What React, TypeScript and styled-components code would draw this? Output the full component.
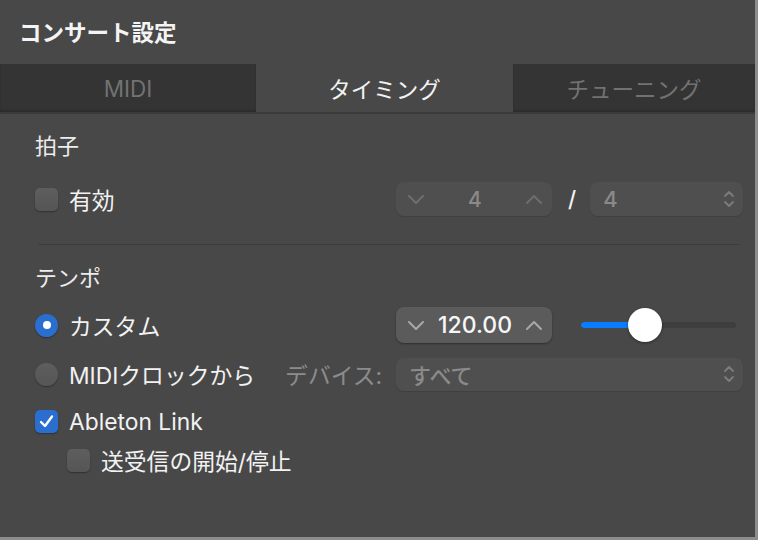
import React from "react";
import styled, { createGlobalStyle } from "styled-components";

const Global = createGlobalStyle`
  html, body { margin: 0; padding: 0; background: #8d8d8d; }
  body { font-family: "Inter", "Noto Sans CJK JP", sans-serif; -webkit-font-smoothing: antialiased; }
`;

const Panel = styled.div`
  width: 755px;
  height: 537px;
  background: #484848;
  border-right: 1px solid #8d8d8d;
  display: flex;
  flex-direction: column;
  overflow: hidden;
`;

const Header = styled.div`
  height: 64px;
  display: flex;
  align-items: center;
  padding: 0 0 3px 19px;
  box-sizing: border-box;
  font-size: 22.5px;
  font-weight: 700;
  color: #f4f4f4;
`;

const TabBar = styled.div`
  height: 48px;
  display: grid;
  grid-template-columns: 256px 257px 1fr;
  border-bottom: 2px solid #3b3b3b;
`;

const Tab = styled.div<{ $active?: boolean }>`
  display: flex;
  align-items: center;
  justify-content: center;
  font-size: 22.5px;
  color: ${(p) => (p.$active ? "#f2f2f2" : "#727272")};
  background: ${(p) => (p.$active ? "#484848" : "#343434")};
  box-shadow: ${(p) => (p.$active ? "none" : "inset 0 -2px 2px rgba(0,0,0,0.15)")};
`;

const Content = styled.div`
  display: flex;
  flex-direction: column;
  padding: 10px 12px 0 35px;
`;

const SectionTitle = styled.div<{ $mt?: number }>`
  height: 40px;
  display: flex;
  align-items: center;
  margin-top: ${(p) => p.$mt ?? 0}px;
  font-size: 22px;
  color: #ececec;
`;

const Row = styled.div<{ $mt?: number; $indent?: number }>`
  height: 38px;
  display: grid;
  grid-template-columns: 361px 1fr;
  align-items: center;
  margin-top: ${(p) => p.$mt ?? 0}px;
  padding-left: ${(p) => p.$indent ?? 0}px;
`;

const Left = styled.div`
  display: flex;
  align-items: center;
  gap: 11px;
  min-width: 0;
  white-space: nowrap;
`;

const Right = styled.div`
  display: flex;
  align-items: center;
`;

const Label = styled.span<{ $dim?: boolean; $ml?: number }>`
  font-size: 22.8px;
  color: ${(p) => (p.$dim ? "#8c8c8c" : "#f2f2f2")};
  margin-left: ${(p) => p.$ml ?? 0}px;
`;

const Box = styled.div<{ $checked?: boolean }>`
  width: 23px;
  height: 23px;
  box-sizing: border-box;
  border-radius: 5px;
  flex: none;
  display: flex;
  align-items: center;
  justify-content: center;
  background: ${(p) => (p.$checked ? "#2a6fd0" : "linear-gradient(#5e5e5e, #555555)")};
  box-shadow: 0 1px 1.5px rgba(0, 0, 0, 0.35);
`;

const Radio = styled.div<{ $checked?: boolean }>`
  width: 23px;
  height: 23px;
  border-radius: 50%;
  flex: none;
  display: flex;
  align-items: center;
  justify-content: center;
  background: ${(p) => (p.$checked ? "#2a6fd0" : "linear-gradient(#5e5e5e, #555555)")};
  box-shadow: 0 1px 1.5px rgba(0, 0, 0, 0.35);
`;

const Dot = styled.div`
  width: 8px;
  height: 8px;
  border-radius: 50%;
  background: #fff;
`;

const Stepper = styled.div<{ $enabled?: boolean }>`
  width: 156px;
  height: ${(p) => (p.$enabled ? 36 : 34)}px;
  box-sizing: border-box;
  border-radius: 8px;
  flex: none;
  display: flex;
  align-items: center;
  justify-content: space-between;
  padding: 0 9px 0 11px;
  background: ${(p) => (p.$enabled ? "#5b5b5b" : "#4f4f4f")};
  box-shadow: ${(p) =>
    p.$enabled ? "0 1px 2px rgba(0,0,0,0.35)" : "0 1px 1px rgba(0,0,0,0.12)"};
`;

const StepValue = styled.span<{ $enabled?: boolean }>`
  font-size: ${(p) => (p.$enabled ? 23 : 21)}px;
  color: ${(p) => (p.$enabled ? "#f6f6f6" : "#8a8a8a")};
  font-weight: 500;
`;

const Slash = styled.span`
  font-size: 22px;
  color: #f2f2f2;
  margin: 0 14px 0 16px;
  font-weight: 500;
`;

const Select = styled.div<{ $h?: number }>`
  flex: 1;
  height: ${(p) => p.$h ?? 34}px;
  box-sizing: border-box;
  border-radius: 8px;
  display: flex;
  align-items: center;
  justify-content: space-between;
  padding: 0 8px 0 13px;
  background: #4f4f4f;
  box-shadow: 0 1px 1px rgba(0, 0, 0, 0.12);
`;

const SelectValue = styled.span`
  font-size: 22px;
  color: #8a8a8a;
  font-weight: 500;
`;

const Slider = styled.div`
  position: relative;
  width: 155px;
  height: 34px;
  margin-left: 29px;
  display: flex;
  align-items: center;
`;

const Track = styled.div`
  width: 100%;
  height: 6px;
  border-radius: 3px;
  background: #3e3e3e;
  overflow: hidden;
`;

const Fill = styled.div`
  height: 100%;
  background: #0a7cff;
  border-radius: 3px;
`;

const Knob = styled.div`
  position: absolute;
  top: 0;
  width: 34px;
  height: 34px;
  margin-left: -17px;
  border-radius: 50%;
  background: #ffffff;
  box-shadow: 0 1px 3px rgba(0, 0, 0, 0.4);
`;

const Divider = styled.div`
  height: 1px;
  background: #3d3d3d;
  margin: 26px 3px 11px 3px;
`;

const Chevron = ({ up, color }: { up?: boolean; color: string }) => (
  <svg width="18" height="11" viewBox="0 0 18 11">
    <path
      d={up ? "M2 9 L9 2 L16 9" : "M2 2 L9 9 L16 2"}
      fill="none"
      stroke={color}
      strokeWidth="2"
      strokeLinecap="round"
      strokeLinejoin="round"
    />
  </svg>
);

const UpDown = () => (
  <svg width="12" height="20" viewBox="0 0 12 20">
    <path d="M2 7 L6 3 L10 7" fill="none" stroke="#7c7c7c" strokeWidth="1.8" strokeLinecap="round" strokeLinejoin="round" />
    <path d="M2 13 L6 17 L10 13" fill="none" stroke="#7c7c7c" strokeWidth="1.8" strokeLinecap="round" strokeLinejoin="round" />
  </svg>
);

const Check = () => (
  <svg width="17" height="15" viewBox="0 0 17 15">
    <path d="M3 8 L7 12 L14 2.5" fill="none" stroke="#fff" strokeWidth="2.4" strokeLinecap="round" strokeLinejoin="round" />
  </svg>
);

export default function App() {
  const pct = 41;
  return (
    <>
      <Global />
      <Panel>
        <Header>コンサート設定</Header>
        <TabBar>
          <Tab>MIDI</Tab>
          <Tab $active>タイミング</Tab>
          <Tab>チューニング</Tab>
        </TabBar>
        <Content>
          <SectionTitle>拍子</SectionTitle>
          <Row $mt={16}>
            <Left>
              <Box />
              <Label>有効</Label>
            </Left>
            <Right>
              <Stepper>
                <Chevron color="#6e6e6e" />
                <StepValue>4</StepValue>
                <Chevron up color="#6e6e6e" />
              </Stepper>
              <Slash>/</Slash>
              <Select>
                <SelectValue>4</SelectValue>
                <UpDown />
              </Select>
            </Right>
          </Row>
          <Divider />
          <SectionTitle>テンポ</SectionTitle>
          <Row $mt={10}>
            <Left>
              <Radio $checked>
                <Dot />
              </Radio>
              <Label>カスタム</Label>
            </Left>
            <Right>
              <Stepper $enabled>
                <Chevron color="#a8a8a8" />
                <StepValue $enabled>120.00</StepValue>
                <Chevron up color="#a8a8a8" />
              </Stepper>
              <Slider>
                <Track>
                  <Fill style={{ width: `${pct}%` }} />
                </Track>
                <Knob style={{ left: `${pct}%` }} />
              </Slider>
            </Right>
          </Row>
          <Row $mt={11}>
            <Left>
              <Radio />
              <Label>MIDIクロックから</Label>
              <Label $dim $ml={19}>デバイス:</Label>
            </Left>
            <Right>
              <Select $h={33}>
                <SelectValue>すべて</SelectValue>
                <UpDown />
              </Select>
            </Right>
          </Row>
          <Row $mt={9}>
            <Left>
              <Box $checked>
                <Check />
              </Box>
              <Label>Ableton Link</Label>
            </Left>
          </Row>
          <Row $mt={1} $indent={32}>
            <Left>
              <Box />
              <Label>送受信の開始/停止</Label>
            </Left>
          </Row>
        </Content>
      </Panel>
    </>
  );
}
